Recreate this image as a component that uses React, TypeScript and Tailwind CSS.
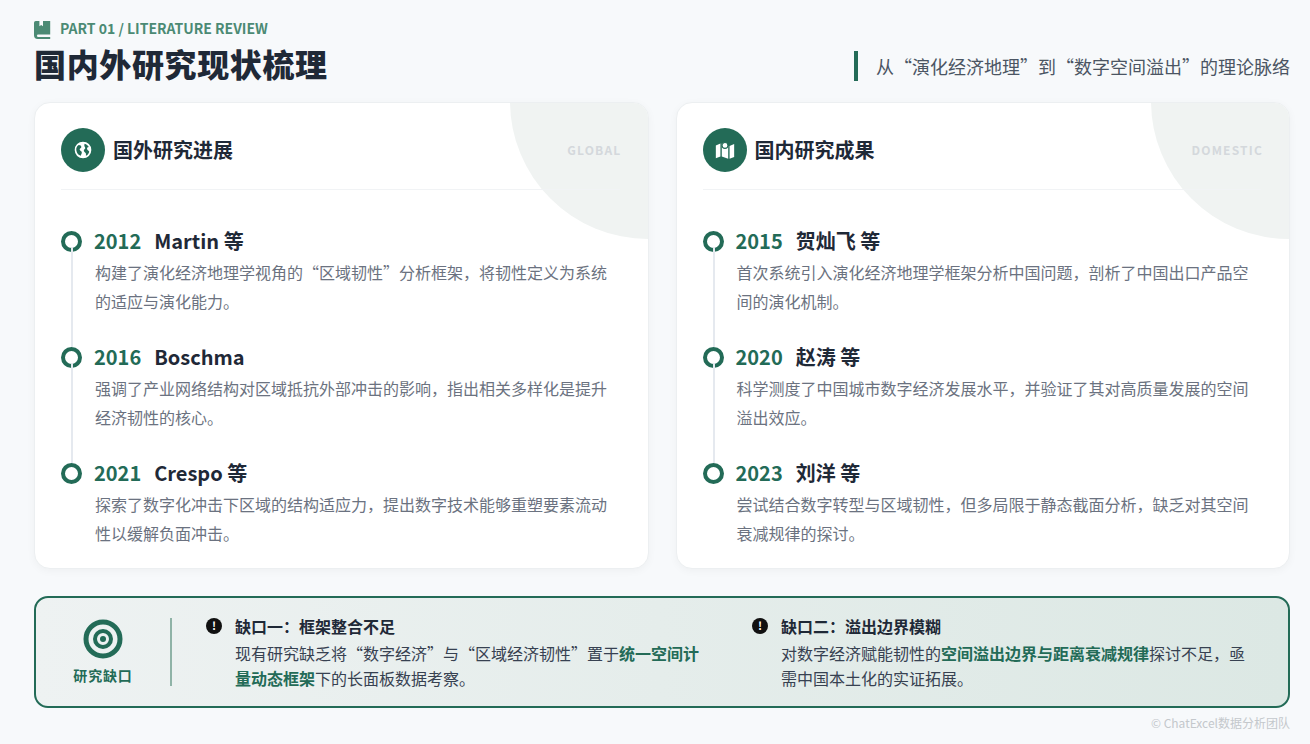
import React from "react";

const G = "#236b57";

function Globe() {
  return (
    <svg viewBox="0 0 24 24" width="20" height="20">
      <circle cx="12" cy="12" r="10" fill="white" />
      <path d="M7 6c2 0 3 1 3 2.5S8 10 8 11.5s2 1.5 2.5 3-1 3-1 4.5C5.5 18 3.5 14 4 10c.5-2 1.5-3.5 3-4zM14 4.5c2 .5 4 2 5 4-1.5 0-2.5 1-2 2.5s2 1.5 2.5 3c-.5 2-2 4-4 5 0-2 .5-3-1-4s-2-2-1-3.5 1.5-1 1-2.5-1.5-2-.5-4.5z" fill={G} />
    </svg>
  );
}
function MapIcon() {
  return (
    <svg viewBox="0 0 24 24" width="22" height="22">
      <path d="M2 7l5-2v14l-5 2zM8.5 5l7 2.5v14l-7-2.5zM17 7.5l5-2v14l-5 2z" fill="white" />
      <circle cx="12" cy="7" r="3.2" fill="white" stroke={G} strokeWidth="1.2" />
      <path d="M12 10.5l-1.8 3.5h3.6z" fill="white" />
    </svg>
  );
}

type Item = { year: string; name: string; desc: string };

function Card({ title, tag, icon, items }: { title: string; tag: string; icon: React.ReactNode; items: Item[] }) {
  return (
    <div className="relative flex-1 overflow-hidden rounded-2xl border border-[#eceff1] bg-white pl-[26px] pr-[28px] pt-[25px] shadow-[0_2px_8px_rgba(0,0,0,0.04)] h-[467px]">
      <div className="absolute -right-[138px] -top-[140px] h-[276px] w-[276px] rounded-full bg-[#f0f3f2]" />
      <div className="relative flex items-center border-b border-[#f1f3f5] pb-[17px]">
        <div className="flex h-[44px] w-[44px] items-center justify-center rounded-full" style={{ background: G }}>{icon}</div>
        <div className="ml-[8px] text-[20px] font-bold text-[#1f2937]">{title}</div>
        <div className="ml-auto mr-[-2px] text-[12px] font-bold tracking-[0.1em] text-[#d4d8dc]">{tag}</div>
      </div>
      <div className="relative mt-[37px]">
        {items.map((it, i) => (
          <div key={i} className="relative pb-[27px]">
            {i < items.length - 1 && <div className="absolute left-[10px] top-[20px] bottom-[-4px] w-[2px] bg-[#e5e9ef]" />}
            <div className="flex items-center h-[28px]">
              <div className="h-[21px] w-[21px] rounded-full border-[4px] bg-white" style={{ borderColor: G }} />
              <span className="ml-[12px] text-[20px] font-bold" style={{ color: G }}>{it.year}</span>
              <span className="ml-[13px] text-[20px] font-bold text-[#1f2937]">{it.name}</span>
            </div>
            <p className="ml-[34px] mt-[3px] text-[16px] leading-[29px] text-[#6b7280]">{it.desc}</p>
          </div>
        ))}
      </div>
    </div>
  );
}

export default function App() {
  return (
    <div className="relative h-[744px] w-[1310px] overflow-hidden bg-[#f7f9fb] pl-[34px] pr-[20px] pt-[18px]" style={{ fontFamily: '"Noto Sans CJK SC", "Noto Sans", sans-serif' }}>
      <div className="flex items-center gap-[8px]">
        <svg viewBox="0 0 20 22" width="18" height="20"><path d="M2 2h4v6l2-1.5L10 8V2h8v15H4a2 2 0 000 3h14v2H4a4 4 0 01-4-4V4a2 2 0 012-2z" fill="#4b8a74" /></svg>
        <span className="text-[14px] font-bold text-[#4b8a74]">PART 01 / LITERATURE REVIEW</span>
      </div>
      <div className="mt-[2px] flex items-center justify-between">
        <h1 className="text-[32px] leading-[44px] font-black tracking-[0.02em] text-[#1f2937]">国内外研究现状梳理</h1>
        <div className="flex items-center border-l-[4px] pl-[18px] text-[18px] text-[#4b5563] h-[30px] mt-[6px]" style={{ borderColor: G }}>从“演化经济地理”到“数字空间溢出”的理论脉络</div>
      </div>
      <div className="mt-[17px] flex gap-[27px]">
        <Card title="国外研究进展" tag="GLOBAL" icon={<Globe />} items={[
          { year: "2012", name: "Martin 等", desc: "构建了演化经济地理学视角的“区域韧性”分析框架，将韧性定义为系统的适应与演化能力。" },
          { year: "2016", name: "Boschma", desc: "强调了产业网络结构对区域抵抗外部冲击的影响，指出相关多样化是提升经济韧性的核心。" },
          { year: "2021", name: "Crespo 等", desc: "探索了数字化冲击下区域的结构适应力，提出数字技术能够重塑要素流动性以缓解负面冲击。" },
        ]} />
        <Card title="国内研究成果" tag="DOMESTIC" icon={<MapIcon />} items={[
          { year: "2015", name: "贺灿飞 等", desc: "首次系统引入演化经济地理学框架分析中国问题，剖析了中国出口产品空间的演化机制。" },
          { year: "2020", name: "赵涛 等", desc: "科学测度了中国城市数字经济发展水平，并验证了其对高质量发展的空间溢出效应。" },
          { year: "2023", name: "刘洋 等", desc: "尝试结合数字转型与区域韧性，但多局限于静态截面分析，缺乏对其空间衰减规律的探讨。" },
        ]} />
      </div>
      <div className="mt-[27px] flex h-[112px] items-center rounded-[14px] border-2 bg-gradient-to-r from-[#eef2f2] to-[#dce8e4]" style={{ borderColor: G }}>
        <div className="flex w-[134px] flex-col items-center">
          <svg viewBox="0 0 40 40" width="40" height="40"><circle cx="20" cy="20" r="17" fill="none" stroke={G} strokeWidth="5" /><circle cx="20" cy="20" r="8" fill="none" stroke={G} strokeWidth="4" /><circle cx="20" cy="20" r="3" fill={G} /></svg>
          <div className="mt-[6px] text-[14px] font-bold tracking-[0.06em]" style={{ color: G }}>研究缺口</div>
        </div>
        <div className="h-[68px] w-[2px] bg-[#8fb3a7]" />
        <div className="ml-[34px] w-[512px]">
          <Gap title="缺口一：框架整合不足">
            现有研究缺乏将“数字经济”与“区域经济韧性”置于<b style={{ color: G }}>统一空间计量动态框架</b>下的长面板数据考察。
          </Gap>
        </div>
        <div className="ml-[34px] w-[500px]">
          <Gap title="缺口二：溢出边界模糊">
            对数字经济赋能韧性的<b style={{ color: G }}>空间溢出边界与距离衰减规律</b>探讨不足，亟需中国本土化的实证拓展。
          </Gap>
        </div>
      </div>
      <div className="absolute bottom-[12px] right-[20px] text-[12px] text-[#c4c8cc]">© ChatExcel数据分析团队</div>
    </div>
  );
}

function Gap({ title, children }: { title: string; children: React.ReactNode }) {
  return (
    <div>
      <div className="flex items-center h-[24px]">
        <span className="flex h-[16px] w-[16px] items-center justify-center rounded-full bg-[#111] text-[11px] font-bold text-white">!</span>
        <span className="ml-[13px] text-[16px] font-bold text-[#1f2937]">{title}</span>
      </div>
      <p className="ml-[29px] mt-[3px] w-[480px] text-[16px] leading-[25px] text-[#374151]">{children}</p>
    </div>
  );
}
